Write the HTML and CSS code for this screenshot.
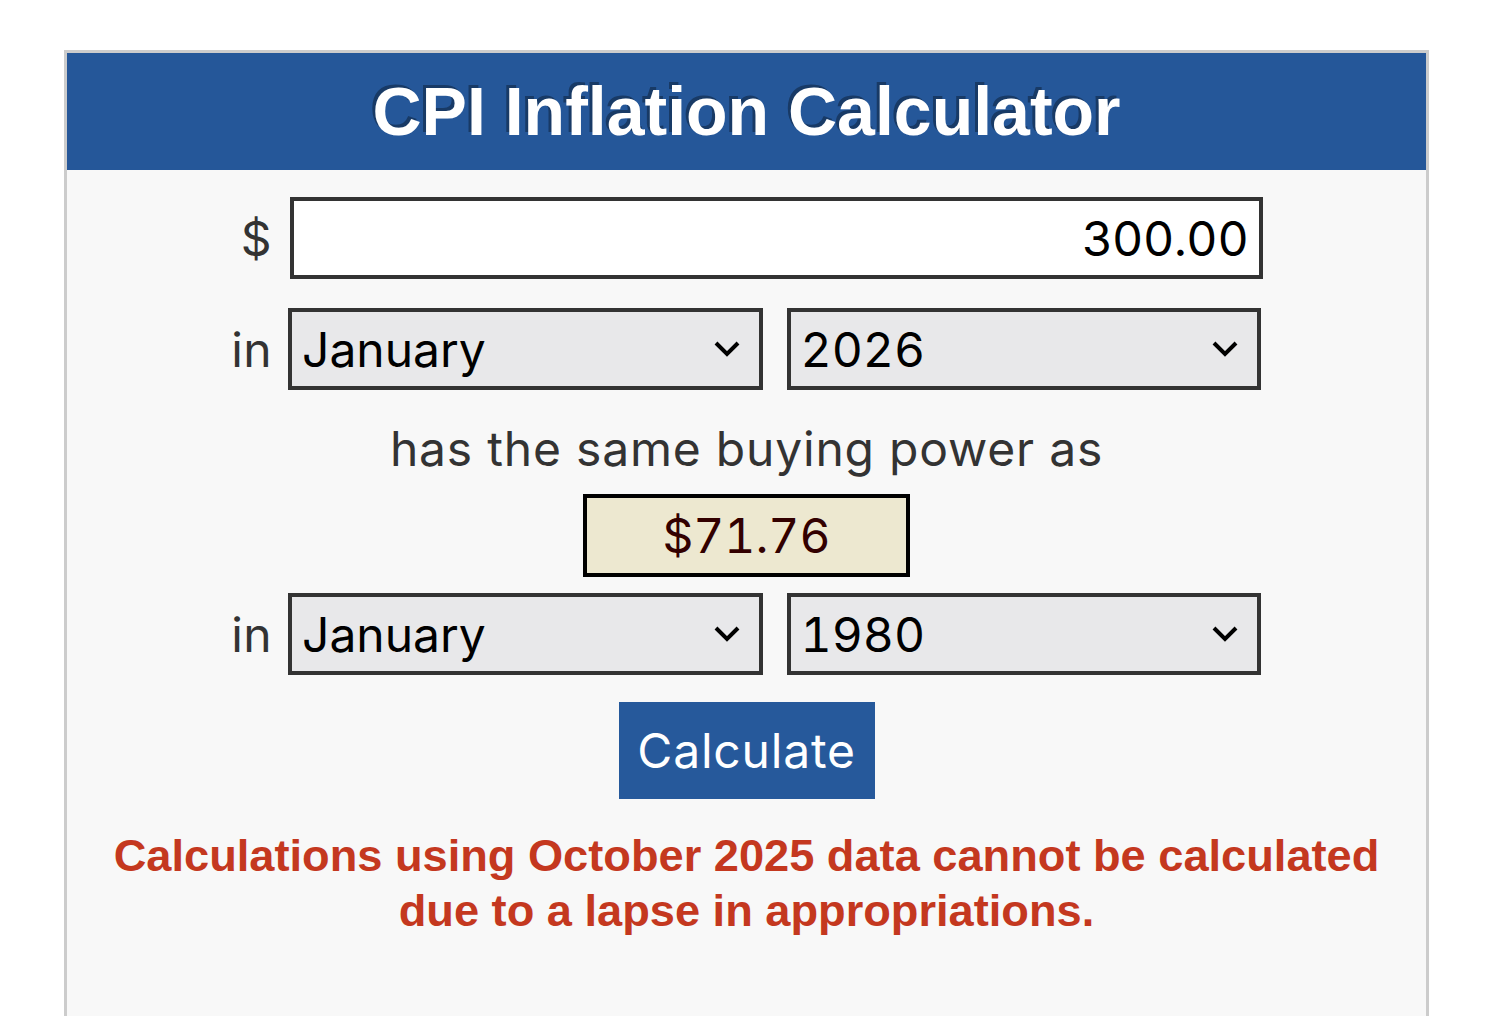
FILE: index.html
```html
<!DOCTYPE html>
<html lang="en">
<head>
    <meta charset="UTF-8">
    <meta name="viewport" content="width=device-width, initial-scale=1.0">
    <title>CPI Inflation Calculator</title>
    <link rel="stylesheet" href="styles.css">
</head>
<body>
    <div class="calculator">
        <h1 class="calc-title">CPI Inflation Calculator</h1>
        <form class="calc-form" id="calcForm">
            <div class="calc-row">
                <label class="row-label" for="cost1">$</label>
                <input class="amount-input" type="text" id="cost1" name="cost1" value="300.00">
            </div>
            <div class="calc-row">
                <span class="row-label">in</span>
                <div class="date-pick">
                    <select class="date-select" id="month1" name="month1">
                        <option selected>January</option>
                        <option>February</option>
                        <option>March</option>
                    </select>
                    <select class="date-select" id="year1" name="year1">
                        <option selected>2026</option>
                        <option>2025</option>
                        <option>2024</option>
                    </select>
                </div>
            </div>

            <p class="calc-text">has the same buying power as</p>
            <div class="answer" id="answer">$71.76</div>

            <div class="calc-row">
                <span class="row-label">in</span>
                <div class="date-pick">
                    <select class="date-select" id="month2" name="month2">
                        <option selected>January</option>
                        <option>February</option>
                        <option>March</option>
                    </select>
                    <select class="date-select" id="year2" name="year2">
                        <option selected>1980</option>
                        <option>1981</option>
                        <option>1982</option>
                    </select>
                </div>
            </div>

            <button type="submit" class="calc-btn">Calculate</button>

            <p class="calc-error">Calculations using October 2025 data cannot be calculated<br>due to a lapse in appropriations.</p>
        </form>
    </div>
</body>
</html>
```

FILE: styles.css
```css
* {
    box-sizing: border-box;
}

body {
    margin: 0;
    background-color: #fff;
    font-family: 'Inter', 'Roboto', sans-serif;
    overflow: hidden;
}

.calculator {
    margin: 50px 0 0 64px;
    width: 1365px;
    min-height: 1000px;
    border: 3px solid #ccc;
    background-color: #f8f8f8;
}

.calc-title {
    margin: 0;
    height: 117px;
    line-height: 117px;
    background-color: #255799;
    color: #fff;
    text-align: center;
    font-family: 'Liberation Sans', Arial, sans-serif;
    font-size: 68px;
    font-weight: bold;
    text-shadow: -3px -3px 0 #183a66;
}

.calc-form {
    padding-top: 27px;
    display: flex;
    flex-direction: column;
    align-items: center;
}

.calc-row {
    align-self: flex-start;
    display: flex;
    align-items: center;
    gap: 18px;
    margin-bottom: 29px;
}

.row-label {
    width: 205px;
    text-align: right;
    color: #333;
    font-size: 48px;
    letter-spacing: 0.4px;
}

.amount-input {
    width: 973px;
    height: 82px;
    padding: 0 10px;
    border: 4px solid #333;
    border-radius: 0;
    background-color: #fff;
    color: #000;
    font-family: inherit;
    font-size: 48px;
    letter-spacing: 0.8px;
    text-align: right;
    outline: none;
}

.date-pick {
    width: 973px;
    margin-left: -2px;
    display: flex;
    gap: 24px;
}

.date-select {
    flex: 1;
    height: 82px;
    padding: 0 10px;
    border: 4px solid #333;
    border-radius: 0;
    background-color: #e8e8ea;
    background-image: url("data:image/svg+xml,%3Csvg xmlns='http://www.w3.org/2000/svg' width='28' height='18' viewBox='0 0 28 18'%3E%3Cpath d='M3 3 L14 14 L25 3' fill='none' stroke='%23000' stroke-width='4'/%3E%3C/svg%3E");
    background-repeat: no-repeat;
    background-position: right 18px center;
    color: #000;
    font-family: inherit;
    font-size: 48px;
    font-variant-numeric: tabular-nums;
    appearance: none;
    -webkit-appearance: none;
}

.calc-text {
    margin: 2px 0 17px;
    line-height: 56px;
    color: #333;
    font-size: 48px;
    letter-spacing: 0.8px;
}

.answer {
    width: 327px;
    height: 83px;
    margin-bottom: 16px;
    border: 4px solid #000;
    background-color: #ede8d0;
    color: #300;
    font-size: 48px;
    font-variant-numeric: tabular-nums;
    line-height: 75px;
    text-align: center;
}

.calc-btn {
    width: 256px;
    height: 97px;
    margin-top: -2px;
    border: none;
    border-radius: 0;
    background-color: #26599b;
    color: #fff;
    font-family: inherit;
    font-size: 48px;
    letter-spacing: 0.8px;
    cursor: pointer;
}

.calc-error {
    margin: 29px 0 0;
    line-height: 55px;
    color: #c4381f;
    text-align: center;
    font-family: 'Liberation Sans', Arial, sans-serif;
    font-size: 45.2px;
    font-weight: bold;
}
```
